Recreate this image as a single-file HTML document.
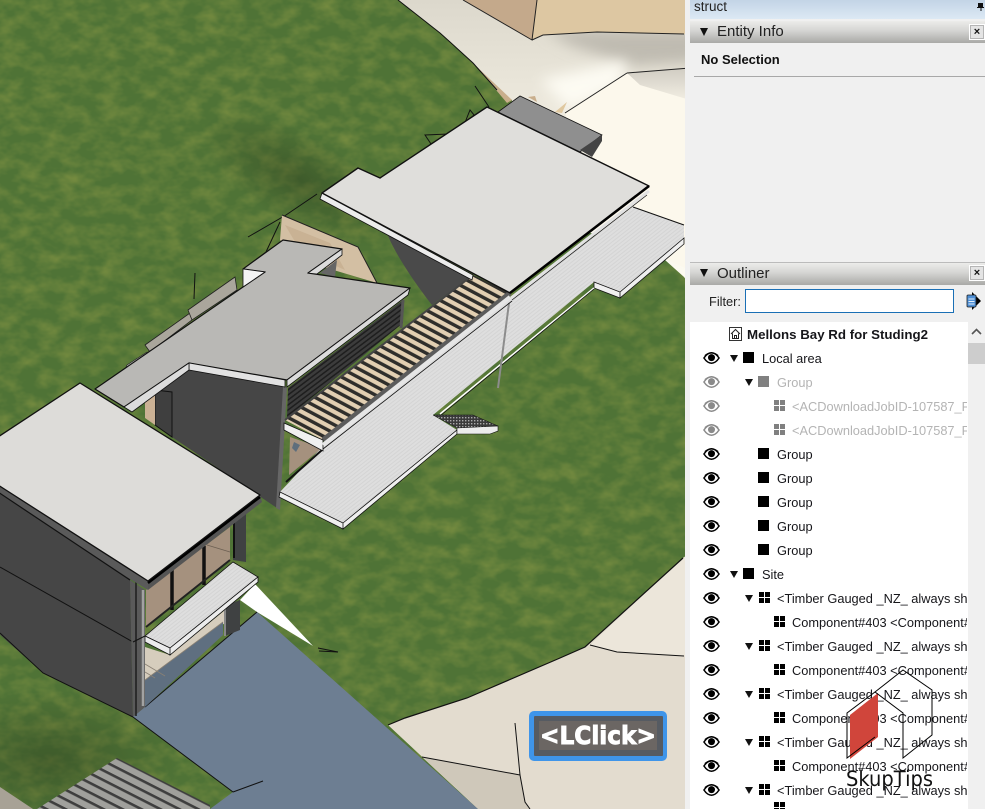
<!DOCTYPE html>
<html><head><meta charset="utf-8"><style>
html,body{margin:0;padding:0;background:#f0f0f0}
#w{position:relative;width:985px;height:809px;overflow:hidden;font-family:"Liberation Sans",sans-serif;color:#111}
#w>svg.scene{position:absolute;left:0;top:0}
.a{position:absolute;white-space:nowrap}
.bar{position:absolute;left:690px;width:295px;background:linear-gradient(#ececea,#d4d4d2 45%,#a9a9a6);}
.x{position:absolute;left:969px;width:14px;height:14px;border:1px solid #fff;background:#e4e4e4;font:bold 11px/14px "Liberation Sans",sans-serif;text-align:center;color:#111;outline:1px solid #b5b5b5;outline-offset:-2px}
.tri{position:absolute;width:0;height:0;border-left:4.5px solid transparent;border-right:4.5px solid transparent;border-top:8px solid #111}
.row{position:absolute;left:690px;width:277px;height:24px;overflow:hidden}
.row span{position:absolute;top:5px;font-size:12.8px;line-height:16px;white-space:nowrap;color:#16161a}
.row.g span{color:#b4b4b4}
.row svg{position:absolute;top:6px}
.row svg.e{top:5px;left:13px;color:#000}
.row.g svg.e{color:#8a8a8a}
.row svg.c{color:#000}
.row.g svg.c{color:#808080}
.row i{position:absolute;top:9px;height:0;border-left:4px solid transparent;border-right:4px solid transparent;border-top:7px solid #111;width:0}
.row b.s{position:absolute;top:6px;width:11px;height:11px;background:#000}
.row.g b.s{background:#808080}
</style></head><body><div id="w">
<svg class="scene" width="690" height="809" viewBox="0 0 690 809" xmlns="http://www.w3.org/2000/svg">
<defs>
<filter id="gr" x="0" y="0" width="100%" height="100%" color-interpolation-filters="sRGB"><feTurbulence type="fractalNoise" baseFrequency="0.05 0.075" numOctaves="3" seed="7"/><feColorMatrix values="0 0 0 0 0.50  0 0 0 0 0.57  0 0 0 0 0.26  1.4 0 0 0 -0.5"/></filter>
<filter id="bl" x="-20%" y="-40%" width="140%" height="180%"><feGaussianBlur stdDeviation="7"/></filter>
<radialGradient id="sh1" cx=".5" cy=".5" r=".5"><stop offset="0" stop-color="#24361a" stop-opacity=".4"/><stop offset="1" stop-color="#24361a" stop-opacity="0"/></radialGradient>
<linearGradient id="top" x1="0" y1="0" x2="0" y2="1"><stop offset="0" stop-color="#dcd8cc"/><stop offset=".35" stop-color="#ece8dc"/><stop offset=".8" stop-color="#fbf8ee"/><stop offset="1" stop-color="#fdfaf0"/></linearGradient>
<linearGradient id="gs2" x1="0" y1="0" x2="0" y2="1"><stop offset="0" stop-color="#d0ccc2"/><stop offset="1" stop-color="#fcf8ec"/></linearGradient>
<clipPath id="abv"><path d="M398 0L515 100L565 113L627 73L690 68V0Z"/></clipPath>
<pattern id="deck" width="3" height="3" patternUnits="userSpaceOnUse" patternTransform="rotate(-38)"><rect width="3" height="3" fill="#dedede"/><rect width="3" height="1" fill="#d4d4d4"/></pattern>
<pattern id="slat" width="8" height="7.6" patternUnits="userSpaceOnUse" patternTransform="rotate(28 285 420)"><rect width="8" height="7.6" fill="#2f2e2b"/><rect width="8" height="4.2" fill="#e2cfb2"/></pattern>
<pattern id="louv" width="8" height="4" patternUnits="userSpaceOnUse" patternTransform="rotate(-37)"><rect width="8" height="4" fill="#3c3c3c"/><rect width="8" height="1.5" fill="#1e1e1e"/></pattern>
<pattern id="corr" width="8" height="8.6" patternUnits="userSpaceOnUse" patternTransform="rotate(27 117 758)"><rect width="8" height="8.6" fill="#a0a09c"/><rect width="8" height="2.6" fill="#3e3e3e"/></pattern>
<pattern id="mesh" width="3" height="3" patternUnits="userSpaceOnUse"><rect width="3" height="3" fill="#3a3a3a"/><rect width="1.4" height="1.4" fill="#aaa"/></pattern>
</defs>
<rect width="690" height="809" fill="#4f7336"/>
<rect width="690" height="809" filter="url(#gr)"/>
<ellipse cx="300" cy="180" rx="110" ry="45" fill="url(#sh1)" transform="rotate(30 300 180)"/>
<ellipse cx="50" cy="760" rx="130" ry="70" fill="url(#sh1)"/>
<!-- upper right terrain -->
<path d="M398 0L440 33L450 42L473 63L497 90L512 100L500 200L665 260L684 277L690 285V0Z" fill="url(#top)"/>
<g clip-path="url(#abv)"><path d="M545 30H700V62L630 66L600 55L570 45Z" fill="#bfbbb1" filter="url(#bl)"/><path d="M540 80L627 60L620 85L570 110Z" fill="#fdfbf3" filter="url(#bl)"/></g>
<path d="M627 73L690 68V110L640 90Z" fill="url(#gs2)"/>
<path d="M627 73L565 113L600 230L690 270V100L640 85Z" fill="#fcf8ec"/>
<path d="M463 0H690V34L597 32L543 35L532 40L537 0Z" fill="#ddc7a2"/>
<path d="M463 0H537L532 40Z" fill="#c4a98b"/>
<path d="M475 65L512 100L507 103Z" fill="#c9ae8c"/>
<path d="M555 112L567 102L562 113Z" fill="#e0c89f"/>
<path d="M398 0L440 33L450 42L473 63L497 90" fill="none" stroke="#111" stroke-width="1"/>
<path d="M463 0L532 40L537 0M532 40L543 35L597 32L684 34M627 73L690 68M627 73L565 113" fill="none" stroke="#222" stroke-width="1"/>
<!-- lower right terrain -->
<path d="M690 553L683 558L585 647L560 658L467 698L405 718L388 725L478 809H690Z" fill="#e3dccf"/>
<path d="M690 553L683 558L590 645L617 652L690 656Z" fill="#ece6da"/>
<path d="M422 757L520 775L525 802L530 809H478Z" fill="#cfc8ba"/>
<path d="M683 558L585 647L560 658L467 698L405 718L388 725" fill="none" stroke="#111" stroke-width="1.2"/>
<path d="M590 645L617 652L684 656M515 723L520 775L525 802L530 809M422 757L520 775" fill="none" stroke="#111" stroke-width="1"/>
<!-- stubs -->
<path d="M475 86L489 107M470 110L464 125L474 115ZM425 135L448 134L431 144ZM317 194L286 215L248 237M280 222L266 252L246 267M195 273L194 299M319 651L338 652" fill="none" stroke="#111" stroke-width="1"/>
<!-- driveway -->
<path d="M240 600L255 584L313 646L257 612Z" fill="#fff"/>
<path d="M133 717L233 792L210 809H478L257 612Z" fill="#6d7e92"/>
<path d="M133 717L233 792M257 612L145 707" fill="none" stroke="#111" stroke-width="1"/>
<path d="M233 792L263 781" stroke="#111" stroke-width="1"/>
<path d="M318 648L338 652" stroke="#111"/>
<!-- corrugated -->
<path d="M0 787L33 809H0Z" fill="#a8a296"/>
<path d="M37 809L117 758L210 805V809Z" fill="url(#corr)"/>
<!-- tan wall -->
<path d="M282 215L358 247L377 283L300 260L280 240Z" fill="#d3bfa3"/>
<path d="M285 225L330 243L345 270L300 250Z" fill="#c9b294"/>
<path d="M282 215L358 247L377 283" fill="none" stroke="#222" stroke-width="1"/>
<!-- parapet -->
<path d="M111 400L127 365L147 352L148 362L130 378Z" fill="#bdbcb8" stroke="#222" stroke-width=".6"/>
<path d="M145 345L190 313L192 320L150 352Z" fill="#aaa69c" stroke="#222" stroke-width=".8"/>
<path d="M188 310L235 277L237 290L192 320Z" fill="#aaa69c" stroke="#222" stroke-width=".8"/>
<!-- mid building wall -->
<path d="M189 370L285 387L277 508L172 437L155 425L150 396Z" fill="#464646"/>
<path d="M155 390L172 392V437L155 425Z" fill="#3f3f3f" stroke="#111"/>
<path d="M145 395L155 388V425L145 418Z" fill="#cbb194"/>
<path d="M283 387L287 387L280 510L276 508Z" fill="#666"/>
<!-- mid roof -->
<path d="M320 273L337 260L335 277Z" fill="#666"/>
<path d="M283 240L342 249L308 273L410 288L287 380L189 363L124 407L95 389L243 287L265 272L243 269Z" fill="#b9b8b5" stroke="#111" stroke-width="1.2" stroke-linejoin="round"/>
<path d="M243 269L265 272L243 287Z" fill="#f4f4f4" stroke="#111" stroke-width=".8"/>
<path d="M342 249L308 273L317 274L342 255Z" fill="#dcdcdc" stroke="#111" stroke-width=".8"/>
<path d="M189 363L285 380V387L189 370Z" fill="#e2e2e2" stroke="#111" stroke-width=".8"/>
<path d="M287 380L410 288L408 295L287 387Z" fill="#dcdcdc" stroke="#111" stroke-width=".8"/>
<path d="M189 363L124 407L132 412L189 370Z" fill="#dcdcdc" stroke="#111" stroke-width=".8"/>
<!-- louvers -->
<path d="M288 388L403 300V323L287 418Z" fill="url(#louv)"/>
<path d="M403 300L401 328" stroke="#555" stroke-width="3"/>
<!-- big roof dark wedge -->
<path d="M387 233C395 255 420 290 432 305L470 277Z" fill="#4a4a4a"/>
<!-- back block -->
<path d="M528 97L535 96L537 102Z" fill="#c9ae8c"/>
<path d="M498 112L520 96L602 135L580 152Z" fill="#8f8f8f" stroke="#111" stroke-width=".8"/>
<path d="M602 135V141L592 157L580 150Z" fill="#444"/>
<!-- deck -->
<path d="M633 207L684 225V238L620 292L594 282L433 415L457 430L343 523L280 492L322 447L510 298Z" fill="url(#deck)"/>
<path d="M684 238L620 292L620 298L684 244ZM594 282L620 292V298L594 288ZM280 492L343 523V529L279 497ZM343 523L457 430V434L343 529Z" fill="#efefef" stroke="#111" stroke-width=".8"/>
<path d="M594 288L440 414" stroke="#fff" stroke-width="1.5"/>
<path d="M594 289L440 416" stroke="#111" stroke-width=".8"/>
<path d="M633 207L684 225" stroke="#111" stroke-width="1"/>
<!-- stair mesh -->
<path d="M433 415L473 415L498 426L457 428Z" fill="url(#mesh)" stroke="#111" stroke-width=".5"/>
<path d="M457 428L498 426V431L490 434L457 434Z" fill="#ececec" stroke="#111" stroke-width=".6"/>
<!-- pole -->
<path d="M509 303L498 388" stroke="#8c8c8c" stroke-width="2"/>
<!-- window under pergola -->
<path d="M290 437L322 448L289 475Z" fill="#a5917e"/>
<path d="M322 450L286 482" stroke="#111" stroke-width="2"/>
<path d="M294 442L300 445L296 452L292 448Z" fill="#5e6e7c"/>
<!-- pergola -->
<path d="M473 275L510 293L323 440L285 420Z" fill="url(#slat)"/>
<path d="M510 293L323 440" stroke="#5c5c5c" stroke-width="5"/>
<path d="M473 275L285 420" stroke="#444" stroke-width="2"/>
<path d="M284 423L323 440V451L284 430Z" fill="#f0f0f0" stroke="#111" stroke-width=".8"/>
<path d="M323 445L510 297" stroke="#e6e6e6" stroke-width="4"/>
<path d="M323 449L512 301" stroke="#111" stroke-width=".8"/>
<!-- big roof -->
<path d="M322 193L473 275L472 280L320 199Z" fill="#ececec" stroke="#111" stroke-width=".8"/>
<path d="M487 107L649 186L510 293L322 193L358 168L380 178Z" fill="#dfdedb" stroke="#111" stroke-width="1.4" stroke-linejoin="round"/>
<path d="M649 186L510 293" stroke="#000" stroke-width="2.5"/>
<path d="M649 191L511 298" stroke="#e2e2e2" stroke-width="3"/>
<path d="M647 195L512 300" stroke="#111" stroke-width=".7"/>
<!-- left house wall -->
<path d="M-2 490L130 578L133 717L43 673L-2 633Z" fill="#464646"/>
<path d="M0 567L133 642" stroke="#111" stroke-width="1"/>
<path d="M0 633L43 673L133 717" fill="none" stroke="#111" stroke-width="1"/>
<!-- windows -->
<path d="M146 590L230 527V560L146 627Z" fill="#a5917e"/>
<path d="M172 570V610M204 546V585" stroke="#111" stroke-width="3.5"/>
<path d="M207 545L230 552" stroke="#6b5f52" stroke-width=".7"/>
<path d="M146 627L230 560" stroke="#222" stroke-width="2"/>
<path d="M233 520L246 510V562L233 560Z" fill="#3f4142"/>
<path d="M234 520V558" stroke="#111" stroke-width="2"/>
<!-- below balcony -->
<path d="M145 647L170 655L225 610V623L145 680Z" fill="#d6cdbd"/>
<path d="M145 680L223 622V635L145 707Z" fill="#5f6f80"/>
<path d="M145 680L223 622M145 664L165 676M145 672L155 678" fill="none" stroke="#8a8174" stroke-width=".8"/>
<path d="M225 606L240 600V630L225 636Z" fill="#3f4142"/>
<path d="M225 606V636" stroke="#888" stroke-width="2"/>
<!-- balcony -->
<path d="M145 636L233 562L258 577L170 648Z" fill="url(#deck)" stroke="#111" stroke-width=".8"/>
<path d="M170 648L258 577V582L170 655ZM145 636L170 648V655L145 642Z" fill="#ececec" stroke="#111" stroke-width=".8"/>
<!-- columns -->
<path d="M130 580L145 590V707L133 717Z" fill="#5a5a5a"/>
<path d="M136 582V716" stroke="#1d1d1d" stroke-width="1.5"/>
<path d="M143 590V706" stroke="#a2a2a2" stroke-width="2.5"/>
<path d="M133 642L145 636" stroke="#111" stroke-width="1"/>
<!-- left roof -->
<path d="M-2 492V485L148 581V590L130 579Z" fill="#5a5a5a"/>
<path d="M148 581L260 495L262 502L148 590Z" fill="#555"/>
<path d="M148 583L260 497" stroke="#000" stroke-width="2.5"/>
<path d="M80 383L260 495L148 581L-2 485V437Z" fill="#dddcd9" stroke="#111" stroke-width="1.3" stroke-linejoin="round"/>
<path d="M-2 492L130 580" stroke="#111" stroke-width="1.2"/>
<!-- LClick -->
<rect x="529" y="711" width="138" height="50" rx="5" fill="#3f95ea"/>
<rect x="534" y="716" width="129" height="40" rx="1" fill="#565b62"/>
<rect x="539" y="721" width="118" height="29" fill="#6b6663"/>
<text x="598" y="744" text-anchor="middle" font-family="'DejaVu Sans',sans-serif" font-weight="bold" font-size="25" fill="#fff" stroke="#fff" stroke-width=".9" textLength="116" lengthAdjust="spacingAndGlyphs">&lt;LClick&gt;</text>
</svg>

<div class="a" style="left:685px;top:0;width:5px;height:809px;background:#f0f0f0"></div>
<div class="a" style="left:690px;top:0;width:295px;height:19px;background:linear-gradient(#c3d4e6,#dce9f4)"></div>
<div class="a" style="left:694px;top:-1px;font-size:13.5px;line-height:16px;color:#222">struct</div>
<svg class="a" style="left:977px;top:2px" width="8" height="9"><path d="M1 1H6V5H7V6H4.5V9H3.5V6H0V5H1Z" fill="#111"/></svg>
<div class="a" style="left:690px;top:19px;width:295px;height:790px;background:#f0f0f0"></div>

<div class="bar" style="top:21px;height:22px"></div>
<div class="tri" style="left:700px;top:28px"></div>
<div class="a" style="left:717px;top:23px;font-size:15px;line-height:18px;color:#222">Entity Info</div>
<div class="x" style="top:24px">×</div>
<div class="a" style="left:701px;top:52px;font-size:13px;line-height:15px;font-weight:bold;color:#111">No Selection</div>
<div class="a" style="left:694px;top:76px;width:291px;height:1px;background:#a8a8a8"></div>

<div class="bar" style="top:262px;height:23px;border-top:1px solid #bbb;box-sizing:border-box"></div>
<div class="tri" style="left:700px;top:269px"></div>
<div class="a" style="left:717px;top:265px;font-size:15px;line-height:18px;color:#222">Outliner</div>
<div class="x" style="top:265px">×</div>
<div class="a" style="left:709px;top:294px;font-size:12.8px;line-height:15px;color:#222">Filter:</div>
<div class="a" style="left:745px;top:289px;width:207px;height:22px;border:1px solid #1a6fb5;background:#fff"></div>
<svg class="a" style="left:965px;top:291px" width="18" height="20"><path d="M7 1L16 10L7 19Z" fill="#000"/><rect x="2" y="4" width="9" height="12" rx="1" fill="#4d8fd6" stroke="#222" stroke-width=".8"/><path d="M3.5 8H9.5M3.5 10.5H9.5M3.5 13H9.5" stroke="#e4eef8" stroke-width="1"/></svg>

<div class="a" style="left:690px;top:322px;width:278px;height:487px;background:#fff"></div>
<div class="a" style="left:968px;top:322px;width:17px;height:487px;background:#f0f0f0"></div>
<div class="a" style="left:968px;top:343px;width:17px;height:21px;background:#cdcdcd"></div>
<svg class="a" style="left:971px;top:328px" width="11" height="8"><path d="M1 6L5.5 1.5L10 6" fill="none" stroke="#555" stroke-width="1.6"/></svg>

<svg width="0" height="0" style="position:absolute"><defs>
<symbol id="eye" viewBox="0 0 18 14"><path d="M1 7C4 2.5 7 1.5 9 1.5S14 2.5 17 7C14 11.5 11 12.5 9 12.5S4 11.500 1 7Z" fill="#fff" stroke="currentColor" stroke-width="1.6"/><circle cx="9" cy="6.600" r="3.700" fill="currentColor"/><path d="M2 4.500C6 .8 12 .8 16 4.500" fill="none" stroke="currentColor" stroke-width="1.400"/></symbol>
<symbol id="comp" viewBox="0 0 11 11"><path d="M0 0H5V5H0ZM6 0H11V5H6ZM0 6H5V11H0ZM6 6H11V11H6Z" fill="currentColor"/></symbol>
</defs></svg>

<div class="row" style="top:322px"><svg style="left:39px;top:5px" width="13" height="14"><rect x=".5" y=".5" width="12" height="13" fill="#fff" stroke="#333"/><path d="M2 7L6.500 2.500L11 7M3.500 6.500V11.500H9.500V6.500M5.500 11.500V8.500H7.500V11.500" fill="none" stroke="#222"/></svg><span style="left:57px;font-weight:bold;font-size:13.300px">Mellons Bay Rd for Studing2</span></div>
<div class="row" style="top:346px"><svg class="e" width="17" height="14"><use href="#eye"/></svg><i style="left:40px"></i><b class="s" style="left:53px"></b><span style="left:72px">Local area</span></div>
<div class="row g" style="top:370px"><svg class="e" width="17" height="14"><use href="#eye"/></svg><i style="left:55px"></i><b class="s" style="left:68px"></b><span style="left:87px">Group</span></div>
<div class="row g" style="top:394px"><svg class="e" width="17" height="14"><use href="#eye"/></svg><svg class="c" style="left:84px" width="11" height="11"><use href="#comp"/></svg><span style="left:102px">&lt;ACDownloadJobID-107587_Foundation</span></div>
<div class="row g" style="top:418px"><svg class="e" width="17" height="14"><use href="#eye"/></svg><svg class="c" style="left:84px" width="11" height="11"><use href="#comp"/></svg><span style="left:102px">&lt;ACDownloadJobID-107587_Foundation</span></div>
<div class="row" style="top:442px"><svg class="e" width="17" height="14"><use href="#eye"/></svg><b class="s" style="left:68px"></b><span style="left:87px">Group</span></div>
<div class="row" style="top:466px"><svg class="e" width="17" height="14"><use href="#eye"/></svg><b class="s" style="left:68px"></b><span style="left:87px">Group</span></div>
<div class="row" style="top:490px"><svg class="e" width="17" height="14"><use href="#eye"/></svg><b class="s" style="left:68px"></b><span style="left:87px">Group</span></div>
<div class="row" style="top:514px"><svg class="e" width="17" height="14"><use href="#eye"/></svg><b class="s" style="left:68px"></b><span style="left:87px">Group</span></div>
<div class="row" style="top:538px"><svg class="e" width="17" height="14"><use href="#eye"/></svg><b class="s" style="left:68px"></b><span style="left:87px">Group</span></div>
<div class="row" style="top:562px"><svg class="e" width="17" height="14"><use href="#eye"/></svg><i style="left:40px"></i><b class="s" style="left:53px"></b><span style="left:72px">Site</span></div>
<div class="row" style="top:586px"><svg class="e" width="17" height="14"><use href="#eye"/></svg><i style="left:55px"></i><svg class="c" style="left:69px" width="11" height="11"><use href="#comp"/></svg><span style="left:87px">&lt;Timber Gauged _NZ_ always show</span></div>
<div class="row" style="top:610px"><svg class="e" width="17" height="14"><use href="#eye"/></svg><svg class="c" style="left:84px" width="11" height="11"><use href="#comp"/></svg><span style="left:102px">Component#403 &lt;Component#403&gt;</span></div>
<div class="row" style="top:634px"><svg class="e" width="17" height="14"><use href="#eye"/></svg><i style="left:55px"></i><svg class="c" style="left:69px" width="11" height="11"><use href="#comp"/></svg><span style="left:87px">&lt;Timber Gauged _NZ_ always show</span></div>
<div class="row" style="top:658px"><svg class="e" width="17" height="14"><use href="#eye"/></svg><svg class="c" style="left:84px" width="11" height="11"><use href="#comp"/></svg><span style="left:102px">Component#403 &lt;Component#403&gt;</span></div>
<div class="row" style="top:682px"><svg class="e" width="17" height="14"><use href="#eye"/></svg><i style="left:55px"></i><svg class="c" style="left:69px" width="11" height="11"><use href="#comp"/></svg><span style="left:87px">&lt;Timber Gauged _NZ_ always show</span></div>
<div class="row" style="top:706px"><svg class="e" width="17" height="14"><use href="#eye"/></svg><svg class="c" style="left:84px" width="11" height="11"><use href="#comp"/></svg><span style="left:102px">Component#403 &lt;Component#403&gt;</span></div>
<div class="row" style="top:730px"><svg class="e" width="17" height="14"><use href="#eye"/></svg><i style="left:55px"></i><svg class="c" style="left:69px" width="11" height="11"><use href="#comp"/></svg><span style="left:87px">&lt;Timber Gauged _NZ_ always show</span></div>
<div class="row" style="top:754px"><svg class="e" width="17" height="14"><use href="#eye"/></svg><svg class="c" style="left:84px" width="11" height="11"><use href="#comp"/></svg><span style="left:102px">Component#403 &lt;Component#403&gt;</span></div>
<div class="row" style="top:778px"><svg class="e" width="17" height="14"><use href="#eye"/></svg><i style="left:55px"></i><svg class="c" style="left:69px" width="11" height="11"><use href="#comp"/></svg><span style="left:87px">&lt;Timber Gauged _NZ_ always show</span></div>
<div class="row" style="top:802px"><svg class="c" style="left:84px;top:0" width="11" height="11"><use href="#comp"/></svg></div>

<svg class="a" style="left:840px;top:660px" width="100" height="135" viewBox="840 660 100 135">
<path d="M850 715L878 693V737L850 759Z" fill="#d0453b"/>
<path d="M875 692L903 670L932 690V735L903 758V713L875 692L847 713V758L875 737" fill="none" stroke="#000" stroke-width="1"/>
<text x="846" y="786" font-family="'DejaVu Sans',sans-serif" font-size="21" fill="#111" textLength="87" lengthAdjust="spacingAndGlyphs">SkupTips</text>
</svg>
</div></body></html>
